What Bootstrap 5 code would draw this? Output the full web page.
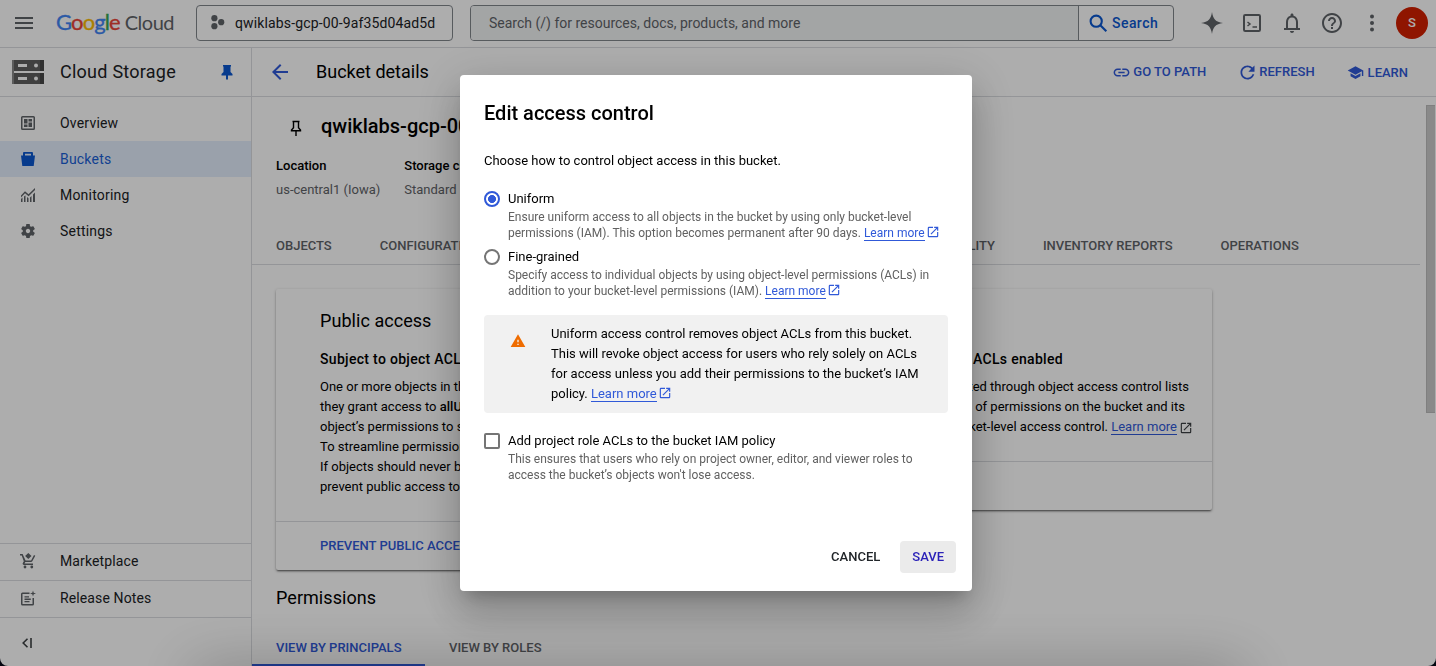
<!DOCTYPE html>
<html lang="en">
<head>
<meta charset="utf-8">
<meta name="viewport" content="width=device-width, initial-scale=1">
<title>Bucket details – Cloud Storage</title>
<link href="https://cdn.jsdelivr.net/npm/bootstrap@5.3.0/dist/css/bootstrap.min.css" rel="stylesheet">
<style>
:root { --line: #dadce0; --blue: #3059d8; --grey: #5f6368; }
html { background: #060a18; }
body { font-family: Roboto, "Liberation Sans", sans-serif; font-size: 13px; line-height: 20px; color: #000; background: none; }
svg { display: block; flex: none; fill: currentColor; }
.app { height: 666px; background: #fff; border-radius: 0 0 8px 8px; }
.line-b { border-bottom: 1px solid var(--line); }
.line-t { border-top: 1px solid var(--line); }
.med { font-weight: 500; }
.blue { color: var(--blue); }
.grey { color: var(--grey); }

/* top bar */
.topbar { height: 48px; color: #5f6368; padding: 0 0 1px 15px; }
.wordmark { font-family: Lato, sans-serif; font-size: 22px; line-height: 24px; margin: 0 0 2px 23px; width: 139px; }
.wordmark b { font-weight: 400; letter-spacing: -.9px; -webkit-text-stroke: .35px; }
.wordmark i { font-style: normal; font-size: 20px; letter-spacing: -.5px; margin-left: 5px; }
.picker { width: 257px; height: 36px; border: 1px solid #80868b; border-radius: 4px; font-size: 14px; letter-spacing: .14px; color: #202124; padding-left: 14px; }
.search { width: 704px; height: 36px; border: 1px solid #80868b; border-radius: 4px; margin-left: 17px; font-size: 14px; }
.search-field { background: #f1f3f4; width: 608px; padding-left: 18px; border-right: 1px solid #80868b; border-radius: 3px 0 0 3px; }
.search-btn { color: #0b57d0; letter-spacing: .45px; padding-left: 10px; }
.tools { margin-left: 26px; }
.avatar { width: 32px; height: 32px; background: #d32000; color: #fff; font-size: 13px; }

/* sidebar */
.side { width: 252px; border-right: 1px solid var(--line); color: #202124; }
.bar2 { height: 49px; }
.product { font-size: 18px; letter-spacing: .25px; }
.side a { height: 36px; font-size: 14px; letter-spacing: .2px; color: #202124; padding-left: 20px; text-decoration: none; }
.side a svg { color: #5f6368; width: 16px; margin-right: 24px; }
.side a.active { background: #e4eefc; color: #1a5fd6; }
.side a.active svg { color: #0b57d0; }
.side .low a { height: 37px; padding: 0 0 2px 20px; letter-spacing: .12px; }

/* main */
.main-bar { padding-left: 20px; padding-right: 28px; }
.actions { color: var(--blue); }
.bucket { padding: 17px 0 0 36px; height: 128px; }
.bucket h1 { font-size: 20px; font-weight: 500; line-height: 24px; }
.tabs { height: 40px; gap: 48px; padding: 2px 0 0 24px; margin-right: 16px; color: #5f6368; white-space: nowrap; }
.tile { width: 456px; border-radius: 2px; box-shadow: 0 2px 2px -1px rgba(0,0,0,.5), 0 1px 3px rgba(0,0,0,.3); white-space: nowrap; overflow: hidden; }
.tile h2, .perm { font-size: 18px; font-weight: 400; letter-spacing: .05px; line-height: 24px; }
.tile h3 { font-size: 14px; font-weight: 500; letter-spacing: .31px; line-height: 20px; }
.tile-body { padding: 20px 20px 0 44px; }
.tile-foot { height: 49px; padding-left: 44px; }
.thumb { position: absolute; right: 1px; top: 8px; width: 9px; height: 308px; background: #cbcbcb; border: 1px solid #bbb; border-right: 0; }
.more { color: var(--blue); text-decoration: none; border-bottom: 1px solid var(--blue); line-height: 14px; display: inline-block; }
.ext { display: inline-block; width: 14px; height: 14px; margin-left: 1px; vertical-align: -2px; }
.principals { border-bottom: 2px solid var(--blue); width: 173px; padding-left: 24px; }

/* dialog */
.modal-backdrop { --bs-backdrop-opacity: .32; }
.low-shade { position: fixed; z-index: 1051; left: 200px; width: 1036px; top: 678px; height: 20px; box-shadow: 0 0 60px 8px rgba(0,0,0,.3); }
.modal { overflow: hidden; }
.modal-dialog { width: 512px; max-width: none; margin: 75px 0 0 460px; }
.modal-content { height: 516px; border: 0; border-radius: 4px; padding: 24px 16px 18px 24px; color: #000; box-shadow: 0 11px 15px -7px rgba(0,0,0,.2), 0 24px 38px 3px rgba(0,0,0,.14), 0 9px 46px 8px rgba(0,0,0,.12); }
.modal-title { font-size: 20px; font-weight: 500; line-height: 28px; }
.opt { min-height: 0; margin: 0; padding: 0 0 0 24px; }
.opt .form-check-input { width: 16px; height: 16px; margin: 2px 0 0 -24px; border: 2px solid #757575; background: none; }
.opt .form-check-input[type=checkbox] { border-radius: 2px; }
.opt .form-check-input[type=radio]:checked { border-color: var(--blue); background: radial-gradient(circle, var(--blue) 3.7px, transparent 4.3px); }
.opt label { display: block; height: 20px; }
.hint { font-size: 12px; line-height: 16px; height: 32px; color: #616161; white-space: nowrap; }
.note { height: 98px; width: 464px; background: #f1f1f1; border-radius: 4px; padding: 9px 0 0 26px; white-space: nowrap; }
.dlg-btn { height: 32px; padding: 0 12px; font-size: 13px; font-weight: 500; line-height: 30px; border-radius: 4px; }
.save { background: #ebebeb; color: #2b22b8; }
</style>
</head>
<body class="overflow-hidden">
<svg class="d-none">
  <symbol id="ext" viewBox="0 0 24 24"><path d="M19 19H5V5h7V3H5a2 2 0 0 0-2 2v14a2 2 0 0 0 2 2h14a2 2 0 0 0 2-2v-7h-2v7zM14 3v2h3.59l-9.83 9.83 1.41 1.41L19 6.41V10h2V3h-7z"/></symbol>
</svg>

<div class="app d-flex flex-column overflow-hidden">
  <header class="topbar line-b d-flex align-items-center flex-shrink-0">
    <svg width="18" height="12"><path d="M0 0h18v2H0zM0 5h18v2H0zM0 10h18v2H0z"/></svg>
    <div class="wordmark text-nowrap"><b><span style="color:#4285f4">G</span><span style="color:#ea4335">o</span><span style="color:#fbbc05">o</span><span style="color:#4285f4">g</span><span style="color:#34a853">l</span><span style="color:#ea4335">e</span></b><i>Cloud</i></div>
    <div class="picker d-flex align-items-center" style="margin-left:1px">
      <svg width="14" height="15" style="margin:0 10px 2px 0"><circle cx="3.4" cy="3.2" r="3.1" fill="#5f6368"/><circle cx="3.4" cy="11.2" r="3.1" fill="#5f6368"/><circle cx="10.2" cy="7.2" r="3.1" fill="#5f6368"/></svg>
      <span>qwiklabs-gcp-00-9af35d04ad5d</span>
    </div>
    <div class="search d-flex">
      <div class="search-field d-flex align-items-center">Search (/) for resources, docs, products, and more</div>
      <div class="search-btn med d-flex align-items-center"><svg width="19" height="19" class="me-1" style="fill:none" stroke="#0b57d0" stroke-width="2.1"><circle cx="7.2" cy="7.2" r="5.6"/><path d="M11.3 11.3l6 6"/></svg>Search</div>
    </div>
    <div class="tools d-flex align-items-center">
      <svg width="24" height="24" viewBox="0 0 24 24"><path d="M12 1c1.100 7.200 3.500 9.900 11 11-7.500 1.100-9.900 3.800-11 11-1.100-7.200-3.500-9.900-11-11 7.500-1.100 9.900-3.800 11-11z"/></svg>
      <svg width="18" height="18" style="margin-left:19px;fill:none" stroke="currentColor" stroke-width="2"><rect x="1" y="1" width="16" height="16" rx="1.2"/><path d="M4.500 8l2.500 2-2.500 2M9.500 13h4.500" stroke-width="1.500"/></svg>
      <svg width="24" height="24" viewBox="0 0 24 24" style="margin-left:19px"><path d="M12 22c1.100 0 2-.9 2-2h-4c0 1.100.9 2 2 2zm6-6v-5c0-3.070-1.630-5.640-4.500-6.320V4c0-.83-.67-1.500-1.500-1.500s-1.500.67-1.500 1.500v.68C7.640 5.360 6 7.920 6 11v6H4v2h16v-2h-2v-1zm-2 1H8v-6c0-2.480 1.510-4.500 4-4.500s4 2.020 4 4.500v6z"/></svg>
      <svg width="24" height="24" viewBox="0 0 24 24" style="margin-left:16px"><path d="M11 18h2v-2h-2v2zm1-16C6.480 2 2 6.480 2 12s4.480 10 10 10 10-4.480 10-10S17.520 2 12 2zm0 18c-4.410 0-8-3.590-8-8s3.590-8 8-8 8 3.590 8 8-3.590 8-8 8zm0-14c-2.210 0-4 1.790-4 4h2c0-1.100.9-2 2-2s2 .9 2 2c0 2-3 1.750-3 5h2c0-2.250 3-2.500 3-5 0-2.210-1.790-4-4-4z"/></svg>
      <svg width="6" height="18" style="margin-left:25px"><circle cx="3" cy="2.500" r="2"/><circle cx="3" cy="9" r="2"/><circle cx="3" cy="15.500" r="2"/></svg>
      <div class="avatar rounded-circle med d-flex align-items-center justify-content-center" style="margin-left:21px">S</div>
    </div>
  </header>

  <div class="d-flex flex-grow-1 overflow-hidden">
    <nav class="side d-flex flex-column flex-shrink-0">
      <div class="bar2 line-b d-flex align-items-center" style="padding-left:12px">
        <svg width="32" height="24"><path fill="#5f5f5f" d="M0 0h32v11H0zM0 13h32v11H0z"/><path fill="#8a8a8a" d="M0 0h2v24H0z"/><path fill="#474747" d="M28 0h4v11h-4zM28 13h4v11h-4z"/><path fill="#fff" d="M6 4h9v3H6zM6 17h9v3H6z"/><circle cx="24" cy="5.500" r="2" fill="#fff"/><circle cx="24" cy="18.500" r="2" fill="#fff"/></svg>
        <span class="product" style="margin-left:16px">Cloud Storage</span>
        <svg width="12" height="15" style="margin-left:45px;color:#0b57d0"><path d="M2 0h8v1.500H9.500V7L11.500 9v1.500H7V14l-1 1-1-1v-3.500H.5V9l2-2V1.500H2z"/></svg>
      </div>
      <div style="padding-top:8px">
        <a class="d-flex align-items-center" href="#"><svg height="16" viewBox="0 0 16 16"><path fill-rule="evenodd" d="M2.500 1h11A1.500 1.500 0 0 1 15 2.500v11a1.500 1.500 0 0 1-1.500 1.500h-11A1.500 1.500 0 0 1 1 13.500v-11A1.500 1.500 0 0 1 2.500 1zm0 1.500v11h11v-11z"/><path d="M4 4h3.500v4.500H4zM8.500 4H12v2.500H8.500zM4 9.500h3.500V12H4zM8.500 7.500H12V12H8.500z"/></svg>Overview</a>
        <a class="active d-flex align-items-center" href="#"><svg height="16" viewBox="0 0 16 16"><path fill-rule="evenodd" d="M1 4.500h2V2.300C3 1.500 3.500 1 4.200 1h7.600c.7 0 1.200.5 1.200 1.300v2.200h2L13.700 15H2.300zM5 2.800v1.700h6V2.800z"/></svg>Buckets</a>
        <a class="d-flex align-items-center" href="#"><svg height="16" viewBox="0 0 16 16"><path d="M1 8.500l4-4.300 3.500 3L15 1v2L8.600 9.200 5 6.200l-4 4.200zM1 12l1.500-1.500V15H1zM4 9.500l1.200-1 .3.300V15H4zM7 10l1.500 1.200V15H7zM10 10.500l1.500-1.500v6H10zM13 7.500L15 5.500V15h-2z"/></svg>Monitoring</a>
        <a class="d-flex align-items-center" href="#"><svg height="16" viewBox="1 1 22 22"><path d="M19.140 12.940c.04-.3.06-.61.06-.94 0-.32-.02-.64-.07-.94l2.030-1.580c.18-.14.23-.41.12-.61l-1.920-3.320c-.12-.22-.37-.29-.59-.22l-2.390.96c-.5-.38-1.030-.7-1.620-.94L14.400 2.810c-.04-.24-.24-.41-.48-.41h-3.840c-.24 0-.43.17-.47.41l-.36 2.540c-.59.24-1.130.57-1.620.94l-2.390-.96c-.22-.08-.47 0-.59.22L2.740 8.870c-.12.21-.08.47.12.61l2.030 1.580c-.05.3-.09.63-.09.94s.02.640.07.940l-2.030 1.580c-.18.140-.23.410-.12.610l1.920 3.320c.12.220.37.290.59.220l2.390-.96c.5.380 1.030.7 1.620.94l.36 2.540c.05.240.24.410.48.410h3.840c.24 0 .44-.17.47-.41l.36-2.540c.59-.24 1.130-.56 1.620-.94l2.390.96c.22.080.47 0 .59-.22l1.920-3.320c.12-.22.07-.47-.12-.61l-2.010-1.580zM12 15c-1.650 0-3-1.350-3-3s1.350-3 3-3 3 1.350 3 3-1.350 3-3 3z"/></svg>Settings</a>
      </div>
      <div class="low mt-auto">
        <a class="line-t d-flex align-items-center" href="#"><svg height="16" viewBox="0 0 16 16"><path d="M0 1h2.600l3 6.500h5.500L14 2l1.300.7-3 5.500c-.3.500-.7.800-1.300.800H5.300l-.8 1.500H13V12H4c-1.100 0-1.700-1-1.200-1.900l1-1.900L1.700 2.500H0zM8.300 0l3.200 3-3.200 3-3.200-3z"/><circle cx="5" cy="14" r="1.400"/><circle cx="11.800" cy="14" r="1.400"/></svg>Marketplace</a>
        <a class="line-t d-flex align-items-center" href="#"><svg height="16" viewBox="0 0 16 16"><path fill-rule="evenodd" d="M9.500 2.500V4h-7v10h10V8H14v6a1.500 1.500 0 0 1-1.500 1.500h-10A1.500 1.500 0 0 1 1 14V4a1.500 1.500 0 0 1 1.500-1.500zM4.500 6.300H9v1.300H4.500zM4.500 8.600h6.300v1.300H4.500zM4.500 10.900h5v1.300h-5zM13 .5l.7 2.300 2.300.7-2.300.7L13 6.500l-.7-2.300-2.300-.7 2.300-.7z"/></svg>Release Notes</a>
        <div class="line-t d-flex align-items-center" style="height:49px;padding:1px 0 0 22px"><svg width="11" height="10" style="fill:none;color:#3c4043" stroke="currentColor" stroke-width="1.600"><path d="M5.500.8L1.200 5l4.300 4.200M9 0v10"/></svg></div>
      </div>
    </nav>

    <main class="flex-grow-1 d-flex flex-column overflow-hidden">
      <div class="main-bar bar2 line-b d-flex align-items-center flex-shrink-0">
        <svg class="blue" width="16" height="16" viewBox="4 4 16 16"><path d="M20 11H7.830l5.590-5.590L12 4l-8 8 8 8 1.410-1.410L7.830 13H20v-2z"/></svg>
        <span style="font-size:18px;margin-left:28px">Bucket details</span>
        <div class="actions med d-flex ms-auto">
          <span class="d-flex align-items-center"><svg width="19" height="19" viewBox="0 0 24 24" style="margin-right:2px"><path d="M3.900 12c0-1.710 1.390-3.100 3.100-3.100h4V7H7c-2.760 0-5 2.240-5 5s2.240 5 5 5h4v-1.900H7c-1.710 0-3.100-1.390-3.100-3.100zM8 13h8v-2H8v2zm9-6h-4v1.900h4c1.710 0 3.100 1.390 3.100 3.100s-1.390 3.100-3.100 3.100h-4V17h4c2.760 0 5-2.240 5-5s-2.240-5-5-5z"/></svg>GO TO PATH</span>
          <span class="d-flex align-items-center" style="margin-left:31px"><svg width="21" height="21" viewBox="0 0 24 24" style="margin-right:1px"><path d="M17.650 6.350C16.200 4.900 14.210 4 12 4c-4.420 0-7.990 3.580-7.990 8s3.570 8 7.990 8c3.730 0 6.840-2.550 7.730-6h-2.080c-.82 2.330-3.040 4-5.650 4-3.310 0-6-2.690-6-6s2.690-6 6-6c1.660 0 3.140.69 4.220 1.780L13 11h7V4l-2.350 2.350z"/></svg>REFRESH</span>
          <span class="d-flex align-items-center" style="margin-left:32px;padding-top:1px"><svg width="17" height="17" viewBox="0 0 24 24" style="margin-right:4px"><path d="M5 13.180v4L12 21l7-3.820v-4L12 17l-7-3.820zM12 3L1 9l11 6 9-4.910V17h2V9L12 3z"/></svg>LEARN</span>
        </div>
      </div>

      <div class="position-relative flex-grow-1">
        <div class="thumb"></div>
        <div class="bucket">
          <div class="d-flex align-items-center">
            <svg width="16" height="16" viewBox="0 0 16 16" style="fill:none;margin-top:3px" stroke="currentColor" stroke-width="1.400"><path d="M4.500 1.500h7M5.500 1.500v6.200L3.500 10v.7h9V10l-2-2.300V1.500M8 10.700V16"/></svg>
            <h1 class="mb-0" style="margin-left:17px">qwiklabs-gcp-00-9af35d04ad5d</h1>
          </div>
          <div class="d-flex" style="gap:24px;margin:18px 0 0 -12px">
            <div><div class="med" style="margin-bottom:4px">Location</div><div class="grey">us-central1 (Iowa)</div></div>
            <div><div class="med" style="margin-bottom:4px">Storage class</div><div class="grey">Standard</div></div>
          </div>
        </div>
        <div class="tabs line-b med d-flex align-items-center">
          <span>OBJECTS</span><span>CONFIGURATION</span><span>PERMISSIONS</span><span>PROTECTION</span><span>LIFECYCLE</span><span>OBSERVABILITY</span><span>INVENTORY REPORTS</span><span>OPERATIONS</span>
        </div>
        <div class="d-flex align-items-start" style="gap:24px;padding:24px 0 0 24px">
          <section class="tile">
            <div class="tile-body" style="height:232px">
              <h2 class="mb-0">Public access</h2>
              <h3 style="margin:16px 0 8px">Subject to object ACLs</h3>
              One or more objects in this bucket are public, as<br>they grant access to <span class="med">allUsers</span>. You can edit an<br>object’s permissions to stop public access.<br>To streamline permissions, use uniform access.<br>If objects should never be public,<br>prevent public access to this bucket.
            </div>
            <div class="tile-foot line-t blue med d-flex align-items-center">PREVENT PUBLIC ACCESS</div>
          </section>
          <section class="tile">
            <div class="tile-body text-end" style="height:172px">
              <h2 class="mb-0 text-start">Access control</h2>
              <h3 style="margin:16px 129px 8px 0">Fine-grained: Object ACLs enabled</h3>
              <div style="margin-right:3px">Access is granted through object access control lists</div>
              <div style="margin-right:7px">Allows specifying of permissions on the bucket and its</div>
              <div style="margin-right:-1px">objects, or bucket-level access control. <a class="more" href="#">Learn more</a><svg class="ext" style="color:#3c4043;margin-left:2px;vertical-align:-4px"><use href="#ext"/></svg></div>
            </div>
            <div class="tile-foot line-t"></div>
          </section>
        </div>
        <div class="perm" style="margin:16px 0 0 24px">Permissions</div>
        <div class="d-flex med" style="height:56px">
          <div class="principals blue d-flex align-items-center" style="padding-top:21px">VIEW BY PRINCIPALS</div>
          <div class="grey d-flex align-items-center" style="padding:19px 0 0 24px">VIEW BY ROLES</div>
        </div>
      </div>
    </main>
  </div>
</div>

<div class="modal-backdrop show"></div>
<div class="low-shade"></div>
<div class="modal d-block" tabindex="-1" role="dialog">
  <div class="modal-dialog">
    <div class="modal-content">
      <h5 class="modal-title">Edit access control</h5>
      <div style="margin-top:24px">Choose how to control object access in this bucket.</div>
      <div class="opt form-check" style="margin-top:18px">
        <input class="form-check-input" type="radio" name="acl" id="uniform" checked>
        <label for="uniform">Uniform</label>
        <div class="hint">Ensure uniform access to all objects in the bucket by using only bucket-level<br>permissions (IAM). This option becomes permanent after 90 days. <a class="more" href="#">Learn more</a><svg class="ext blue"><use href="#ext"/></svg></div>
      </div>
      <div class="opt form-check" style="margin-top:6px">
        <input class="form-check-input" type="radio" name="acl" id="fine">
        <label for="fine">Fine-grained</label>
        <div class="hint">Specify access to individual objects by using object-level permissions (ACLs) in<br>addition to your bucket-level permissions (IAM). <a class="more" href="#">Learn more</a><svg class="ext blue"><use href="#ext"/></svg></div>
      </div>
      <div class="note d-flex" style="margin-top:16px">
        <svg width="16" height="16" viewBox="0 0 24 24" style="color:#ef6c00;margin:9px 25px 0 0"><path d="M1 21h22L12 2 1 21zm12-3h-2v-2h2v2zm0-4h-2v-4h2v4z"/></svg>
        <div>Uniform access control removes object ACLs from this bucket.<br>This will revoke object access for users who rely solely on ACLs<br>for access unless you add their permissions to the bucket’s IAM<br>policy. <a class="more" href="#">Learn more</a><svg class="ext blue"><use href="#ext"/></svg></div>
      </div>
      <div class="opt form-check" style="margin-top:18px">
        <input class="form-check-input" type="checkbox" id="roles">
        <label for="roles">Add project role ACLs to the bucket IAM policy</label>
        <div class="hint">This ensures that users who rely on project owner, editor, and viewer roles to<br>access the bucket’s objects won't lose access.</div>
      </div>
      <div class="d-flex justify-content-end mt-auto" style="gap:8px">
        <button class="btn dlg-btn border-0" type="button">CANCEL</button>
        <button class="btn dlg-btn border-0 save" type="button">SAVE</button>
      </div>
    </div>
  </div>
</div>
<script src="https://cdn.jsdelivr.net/npm/bootstrap@5.3.0/dist/js/bootstrap.bundle.min.js"></script>
</body>
</html>
